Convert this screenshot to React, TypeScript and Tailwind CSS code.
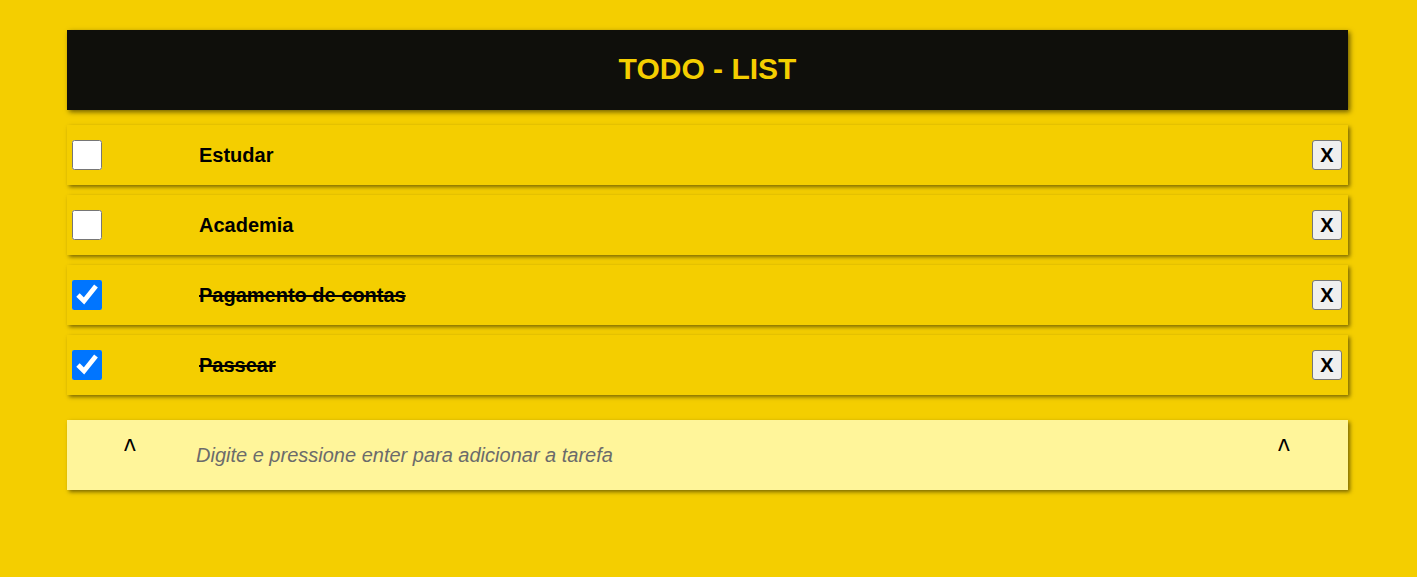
import React, { useState } from 'react';

interface Task {
  id: number;
  title: string;
  done: boolean;
}

const initialTasks: Task[] = [
  { id: 1, title: 'Estudar', done: false },
  { id: 2, title: 'Academia', done: false },
  { id: 3, title: 'Pagamento de contas', done: true },
  { id: 4, title: 'Passear', done: true },
];

const App: React.FC = () => {
  const [tasks, setTasks] = useState<Task[]>(initialTasks);
  const [text, setText] = useState('');

  const toggle = (id: number) =>
    setTasks((prev) => prev.map((t) => (t.id === id ? { ...t, done: !t.done } : t)));

  const remove = (id: number) => setTasks((prev) => prev.filter((t) => t.id !== id));

  const handleKey = (e: React.KeyboardEvent<HTMLInputElement>) => {
    if (e.key === 'Enter' && text.trim()) {
      setTasks((prev) => [...prev, { id: Date.now(), title: text.trim(), done: false }]);
      setText('');
    }
  };

  return (
    <div className="min-h-[577px] w-full bg-[#f4ce00] pt-[30px] font-['Liberation_Sans',Arial,sans-serif]">
      <div className="ml-[67px] w-[1281px]">
        <header className="h-[80px] pb-[3px] bg-[#0f0f0b] shadow-[2px_2px_5px_rgba(0,0,0,0.55)] flex items-center justify-center">
          <h1 className="text-[30px] font-bold text-[#f4ce00]">TODO - LIST</h1>
        </header>

        <ul className="mt-[15px] flex flex-col gap-[10px]">
          {tasks.map((task) => (
            <li
              key={task.id}
              className="h-[60px] bg-[#f4ce00] shadow-[2px_2px_4px_rgba(0,0,0,0.5)] flex items-center pl-[5px] pr-[6px]"
            >
              <input
                type="checkbox"
                checked={task.done}
                onChange={() => toggle(task.id)}
                className="m-0 w-[30px] h-[30px] shrink-0 cursor-pointer"
              />
              <span
                className={`ml-[97px] flex-1 text-[20px] font-bold text-black ${task.done ? 'line-through decoration-2' : ''}`}
              >
                {task.title}
              </span>
              <button
                onClick={() => remove(task.id)}
                className="w-[30px] h-[30px] bg-[#efefef] border border-[#767676] rounded-[3px] text-[20px] font-bold text-black leading-none flex items-center justify-center"
              >
                X
              </button>
            </li>
          ))}
        </ul>

        <div className="mt-[25px] h-[70px] bg-[#fff59a] shadow-[2px_2px_4px_rgba(0,0,0,0.5)] flex items-center">
          <span className="ml-[57px] w-[20px] self-start mt-[14px] text-[25px] leading-none text-black scale-y-[1.35] origin-top">^</span>
          <input
            value={text}
            onChange={(e) => setText(e.target.value)}
            onKeyDown={handleKey}
            placeholder="Digite e pressione enter para adicionar a tarefa"
            className="ml-[52px] flex-1 bg-transparent outline-none text-[20px] italic text-black placeholder:text-[#6b6b6b]"
          />
          <span className="mr-[50px] ml-[10px] w-[20px] self-start mt-[14px] text-[25px] leading-none text-black scale-y-[1.35] origin-top">^</span>
        </div>
      </div>
    </div>
  );
};

export default App;
